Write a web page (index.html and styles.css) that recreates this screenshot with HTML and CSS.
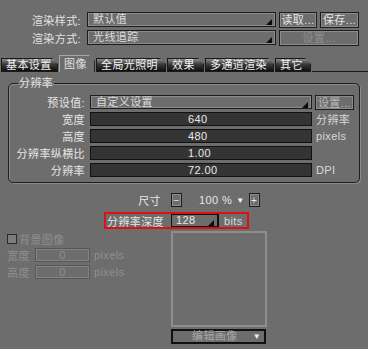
FILE: index.html
```html
<!DOCTYPE html>
<html lang="zh">
<head>
    <meta charset="UTF-8">
    <title>渲染设置</title>
    <link rel="stylesheet" href="styles.css">
</head>
<body>
    <div class="top">
        <div class="row">
            <span class="lbl">渲染样式:</span>
            <div class="field drop"><span>默认值</span><i class="tri"></i></div>
            <button class="btn">读取...</button>
            <button class="btn b2">保存...</button>
        </div>
        <div class="row">
            <span class="lbl">渲染方式:</span>
            <div class="field drop"><span>光线追踪</span><i class="tri"></i></div>
            <button class="btn wide" disabled>设置...</button>
        </div>
    </div>

    <div class="tabs">
        <div class="tab t1">基本设置</div>
        <div class="tab active t2">图像</div>
        <div class="tab t3">全局光照明</div>
        <div class="tab t4">效果</div>
        <div class="tab t5">多通道渲染</div>
        <div class="tab t6">其它</div>
        <div class="tab-rest"></div>
    </div>

    <fieldset class="group">
        <legend>分辨率</legend>
        <div class="grow">
            <span class="glbl">预设值:</span>
            <div class="field drop gfield"><span>自定义设置</span><i class="tri"></i></div>
            <button class="btn small">设置...</button>
        </div>
        <div class="grow">
            <span class="glbl">宽度</span>
            <div class="field dark gfield">640</div>
            <span class="unit">分辨率</span>
        </div>
        <div class="grow">
            <span class="glbl">高度</span>
            <div class="field dark gfield">480</div>
            <span class="unit">pixels</span>
        </div>
        <div class="grow">
            <span class="glbl">分辨率纵横比</span>
            <div class="field dark gfield">1.00</div>
        </div>
        <div class="grow">
            <span class="glbl">分辨率</span>
            <div class="field dark gfield">72.00</div>
            <span class="unit">DPI</span>
        </div>
    </fieldset>

    <div class="lower">
        <div class="size-row">
            <span class="size-lbl">尺寸</span>
            <button class="sq">−</button>
            <span class="pct">100 %</span>
            <span class="down">▼</span>
            <button class="sq">+</button>
        </div>
        <div class="depth">
            <span class="depth-lbl">分辨率深度</span>
            <div class="field dark drop dfield"><span>128</span><i class="tri"></i></div>
            <span class="bits">bits</span>
        </div>
        <div class="bottom">
            <div class="bg-panel">
                <div class="check"><i class="box"></i><span>背景图像</span></div>
                <div class="prow">
                    <span class="plbl">宽度</span>
                    <div class="field off">0</div>
                    <span class="punit">pixels</span>
                </div>
                <div class="prow">
                    <span class="plbl">高度</span>
                    <div class="field off">0</div>
                    <span class="punit">pixels</span>
                </div>
            </div>
            <div class="preview-col">
                <div class="preview"></div>
                <div class="edit"><span class="edit-txt">编辑画像</span><span class="edit-arrow">▼</span></div>
            </div>
        </div>
    </div>
</body>
</html>
```

FILE: styles.css
```css
body {
    margin: 0;
    width: 368px;
    height: 349px;
    overflow: hidden;
    background-color: #6d6d6d;
    color: #e6e6e6;
    font-family: 'Liberation Sans', 'Noto Sans CJK SC', sans-serif;
    font-size: 11px;
    letter-spacing: 0.4px;
}
button {
    font-family: inherit;
    font-size: 11px;
    letter-spacing: 0.4px;
    padding: 0;
    margin: 0;
}

/* top rows */
.top {
    padding-top: 12px;
    display: flex;
    flex-direction: column;
    gap: 3px;
}
.row {
    display: flex;
    align-items: center;
    height: 15px;
}
.lbl {
    width: 81px;
    text-align: right;
    color: #e2e2e2;
}
.field {
    box-sizing: border-box;
    height: 15px;
    border: 1px solid #1c1c1c;
    box-shadow: inset 0 0 0 1px #8c8c8c;
    display: flex;
    align-items: center;
    padding-left: 5px;
    line-height: 13px;
    color: #dcdcdc;
}
.row .field {
    width: 189px;
    margin-left: 6px;
}
.tri {
    margin-left: auto;
    margin-right: 3px;
    margin-top: 5px;
    width: 0;
    height: 0;
    border-left: 6px solid transparent;
    border-bottom: 6px solid #0c0c0c;
}
.btn {
    box-sizing: border-box;
    height: 16px;
    width: 38px;
    margin-left: 3px;
    background: #6d6d6d;
    border: 1px solid #1c1c1c;
    box-shadow: inset 0 0 0 1px #8c8c8c;
    color: #e6e6e6;
    line-height: 14px;
}
.btn.b2 {
    width: 39px;
}
.btn.wide {
    width: 80px;
}
.btn:disabled {
    color: #8e8e8e;
}

/* tabs */
.tabs {
    display: flex;
    align-items: flex-end;
    height: 27px;
    padding-left: 1px;
    gap: 1px;
}
.tab {
    box-sizing: border-box;
    height: 14px;
    padding-left: 4px;
    line-height: 13px;
    color: #f2f2f2;
    background: linear-gradient(#8a8a8a, #3a3a3a 45%, #0e0e0e);
    border: 1px solid #1a1a1a;
    clip-path: polygon(0 0, calc(100% - 6px) 0, 100% 6px, 100% 100%, 0 100%);
    white-space: nowrap;
}
.tab.active {
    height: 17px;
    padding-top: 2px;
    background: #6d6d6d;
    color: #e0e0e0;
    border: 1px solid #a8a8a8;
    border-right-color: #2a2a2a;
    border-bottom: none;
}
.t1 { width: 57px; }
.t2 { width: 36px; }
.t3 { width: 70px; }
.t4 { width: 37px; }
.t5 { width: 69px; }
.t6 { width: 36px; }
.tab-rest {
    flex: 1;
    border-bottom: 1px solid #1a1a1a;
}

/* resolution group */
.group {
    box-sizing: border-box;
    margin: 5px 0 0 8px;
    width: 352px;
    padding: 6px 0 5px 0;
    border: 1px solid #1e1e1e;
    border-radius: 5px;
    box-shadow: 1px 1px 0 #8a8a8a, inset 1px 1px 0 #8a8a8a;
    display: flex;
    flex-direction: column;
    gap: 3px;
}
.group legend {
    margin-left: 9px;
    padding: 0 1px;
    line-height: 12px;
    color: #e6e6e6;
}
.grow {
    display: flex;
    align-items: center;
    height: 14px;
}
.glbl {
    width: 76px;
    text-align: right;
    color: #e6e6e6;
}
.gfield {
    width: 222px;
    height: 14px;
    margin-left: 5px;
}
.field.dark {
    background: #343434;
    border-color: #111;
    box-shadow: none;
    padding-left: 97px;
    color: #e8e8e8;
}
.btn.small {
    width: 39px;
    height: 15px;
    color: #b8b8b8;
}
.unit {
    margin-left: 4px;
    color: #d8d8d8;
}

/* lower area */
.lower {
    padding-top: 10px;
}
.size-row {
    display: flex;
    align-items: center;
    height: 14px;
}
.size-lbl {
    width: 161px;
    text-align: right;
}
.sq {
    box-sizing: border-box;
    width: 11px;
    height: 14px;
    margin-left: 10px;
    background: #6d6d6d;
    border: 1px solid #1c1c1c;
    box-shadow: inset 0 0 0 1px #8c8c8c;
    color: #e6e6e6;
    line-height: 11px;
    font-size: 10px;
}
.pct {
    margin-left: 17px;
    color: #e6e6e6;
}
.down {
    margin-left: 4px;
    font-size: 8px;
    color: #f4f4f4;
}
.size-row .sq:last-child {
    margin-left: 4px;
}
.depth {
    box-sizing: border-box;
    display: flex;
    align-items: center;
    margin: 5px 0 0 104px;
    width: 145px;
    height: 17px;
    border: 2px solid #e01010;
    padding-left: 1px;
}
.depth-lbl {
    width: 64px;
}
.dfield {
    width: 48px;
    height: 13px;
    padding-left: 4px !important;
    border-color: #0e0e0e;
    background: #6d6d6d !important;
    border-right: 2px solid #0e0e0e;
}
.bits {
    margin-left: 5px;
    color: #dcdcdc;
}
.bottom {
    display: flex;
    margin-top: 2px;
}
.bg-panel {
    width: 171px;
    box-sizing: border-box;
    padding: 2px 0 0 7px;
    display: flex;
    flex-direction: column;
    gap: 2px;
    color: #8f8f8f;
}
.check {
    display: flex;
    align-items: center;
    height: 12px;
    gap: 2px;
}
.box {
    box-sizing: border-box;
    width: 10px;
    height: 10px;
    border: 1px solid #2a2a2a;
    background: #7c7c7c;
}
.prow {
    display: flex;
    align-items: center;
    height: 14px;
    margin-top: 1px;
}
.plbl {
    width: 28px;
}
.field.off {
    width: 55px;
    height: 14px;
    border-color: #555;
    box-shadow: inset 0 0 0 1px #848484;
    justify-content: center;
    padding-left: 0;
    color: #8f8f8f;
}
.punit {
    margin-left: 4px;
}
.preview-col {
    display: flex;
    flex-direction: column;
    gap: 2px;
}
.preview {
    box-sizing: border-box;
    width: 96px;
    height: 96px;
    border: 2px solid #8e8e8e;
}
.edit {
    box-sizing: border-box;
    width: 95px;
    height: 15px;
    border: 2px solid #111;
    display: flex;
    align-items: center;
    line-height: 11px;
}
.edit-txt {
    flex: 1;
    text-align: center;
    color: #a8a8a8;
    padding-left: 4px;
}
.edit-arrow {
    font-size: 8px;
    color: #f4f4f4;
    margin-right: 3px;
}
```
